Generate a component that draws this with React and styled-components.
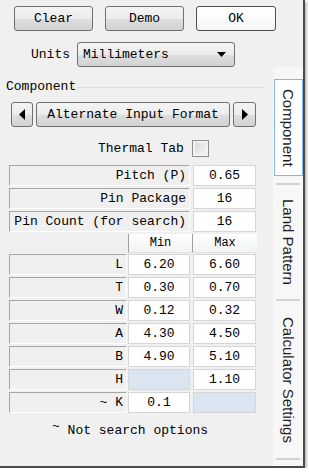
import React from "react";
import styled, { createGlobalStyle } from "styled-components";

const GlobalStyle = createGlobalStyle`
  html, body {
    margin: 0;
    padding: 0;
    background: #ffffff;
  }
  body {
    font-family: "Liberation Mono", "DejaVu Sans Mono", monospace;
    font-size: 13px;
    color: #000;
  }
`;

const Window = styled.div`
  width: 303px;
  height: 466px;
  background: #f0f0f0;
  border-right: 2px solid #4a4a4a;
  border-bottom: 2px solid #4a4a4a;
  box-shadow: 2px 2px 2px rgba(0, 0, 0, 0.25);
  display: flex;
  flex-direction: column;
`;

const ButtonBar = styled.div`
  display: flex;
  gap: 12px;
  padding: 6px 0 0 14px;
`;

const Button = styled.button`
  box-sizing: border-box;
  width: ${p => p.$w}px;
  height: 25px;
  padding: 0;
  border: 1px solid ${p => (p.$primary ? "#505050" : "#707070")};
  border-radius: 3px;
  background: ${p =>
    p.$primary
      ? "linear-gradient(#ffffff, #f6f6f6)"
      : "linear-gradient(#f4f4f4 0%, #ececec 50%, #dedede 51%, #d2d2d2 100%)"};
  font: inherit;
  line-height: 23px;
  color: #000;
`;

const UnitsRow = styled.div`
  display: flex;
  align-items: center;
  gap: 7px;
  margin-top: 11px;
  padding-left: 31px;
`;

const Select = styled.div`
  box-sizing: border-box;
  width: 158px;
  height: 25px;
  display: flex;
  align-items: center;
  justify-content: space-between;
  padding: 0 8px 0 5px;
  border: 1px solid #707070;
  border-radius: 3px;
  background: linear-gradient(#f4f4f4 0%, #ececec 50%, #dedede 51%, #d2d2d2 100%);
`;

const Body = styled.div`
  flex: 1;
  display: flex;
`;

const Main = styled.div`
  width: 273px;
`;

const SectionTitle = styled.div`
  display: flex;
  align-items: center;
  height: 14px;
  line-height: 14px;
  margin: 13px 8px 0 0;
  padding-left: 6px;

  &::after {
    content: "";
    flex: 1;
    height: 1px;
    margin-left: 1px;
    background: #d5dfe6;
  }
`;

const ArrowRow = styled.div`
  display: flex;
  gap: 3px;
  margin-top: 8px;
  padding-left: 11px;
`;

const ArrowButton = styled(Button)`
  display: flex;
  align-items: center;
  justify-content: center;
`;

const ThermalRow = styled.div`
  display: flex;
  align-items: center;
  gap: 8px;
  height: 17px;
  margin-top: 13px;
  padding-left: 98px;
`;

const Checkbox = styled.div`
  box-sizing: border-box;
  width: 17px;
  height: 17px;
  border: 1px solid #8e8f8f;
  background: linear-gradient(135deg, #d8d8d8, #f6f6f6);
  box-shadow: inset 0 0 0 2px #f2f2f2;
`;

const Row = styled.div`
  display: flex;
  height: ${p => p.$h || 21}px;
  margin-top: ${p => p.$gap}px;
  padding-left: ${p => p.$indent || 9}px;
`;

const LabelCell = styled.div`
  box-sizing: border-box;
  width: ${p => p.$w}px;
  display: flex;
  align-items: center;
  justify-content: flex-end;
  padding-right: 3px;
  border: 1px solid;
  border-color: #a6a6a6 #ffffff #ffffff #a6a6a6;
  background: #f0f0f0;
  white-space: pre;
`;

const ValueCell = styled.div`
  box-sizing: border-box;
  width: ${p => p.$w}px;
  margin-left: ${p => p.$ml}px;
  display: flex;
  align-items: center;
  justify-content: center;
  border: 1px solid #d6d6d6;
  background: ${p => (p.$empty ? "#dae5f1" : "#ffffff")};
`;

const HeaderCell = styled.div`
  box-sizing: border-box;
  width: ${p => p.$w}px;
  display: flex;
  align-items: center;
  justify-content: center;
  border-left: 1px solid #a0a0a0;
  border-bottom: 1px solid #e2e2e2;
  background: linear-gradient(#ffffff, #f1f2f4);
  font-size: 12px;
`;

const Tilde = styled.span`
  vertical-align: 4px;
`;

const Note = styled.div`
  margin-top: 7px;
  padding-left: 52px;
  line-height: 14px;
  white-space: pre;
`;

const TabStrip = styled.div`
  width: 30px;
  display: flex;
  flex-direction: column;
  padding-top: 12px;
  background: #f7f7f7;
  font-family: "Liberation Sans", Arial, sans-serif;
  font-size: 15px;
  color: #1e1e1e;
`;

const Tab = styled.div`
  box-sizing: border-box;
  height: ${p => p.$h}px;
  margin-left: 1px;
  display: flex;
  align-items: center;
  justify-content: center;
  writing-mode: vertical-rl;
  border: 1px solid ${p => (p.$active ? "#86b7ea" : "transparent")};
  background: ${p => (p.$active ? "#ffffff" : "transparent")};
`;

const TabSep = styled.div`
  height: 2px;
  margin: ${p => p.$mt || 0}px 3px 0 3px;
  background: #d2d2d2;
`;

const Triangle = ({ dir }) => {
  const pts = {
    down: "0,0 9,0 4.5,5",
    left: "6,0 6,11 0,5.5",
    right: "0,0 0,11 6,5.5",
  };
  const size = dir === "down" ? [9, 5] : [6, 11];
  return (
    <svg width={size[0]} height={size[1]} viewBox={`0 0 ${size[0]} ${size[1]}`}>
      <polygon points={pts[dir]} fill="#000" />
    </svg>
  );
};

const dims = [
  { k: "L", min: "6.20", max: "6.60" },
  { k: "T", min: "0.30", max: "0.70" },
  { k: "W", min: "0.12", max: "0.32" },
  { k: "A", min: "4.30", max: "4.50" },
  { k: "B", min: "4.90", max: "5.10" },
  { k: "H", min: "", max: "1.10" },
];

export default function App() {
  return (
    <>
      <GlobalStyle />
      <Window>
        <ButtonBar>
          <Button $w={79}>Clear</Button>
          <Button $w={79}>Demo</Button>
          <Button $w={80} $primary>OK</Button>
        </ButtonBar>
        <UnitsRow>
          <span>Units</span>
          <Select>
            <span>Millimeters</span>
            <Triangle dir="down" />
          </Select>
        </UnitsRow>
        <Body>
          <Main>
            <SectionTitle>Component</SectionTitle>
            <ArrowRow>
              <ArrowButton $w={22}><Triangle dir="left" /></ArrowButton>
              <Button $w={194}>Alternate Input Format</Button>
              <ArrowButton $w={23}><Triangle dir="right" /></ArrowButton>
            </ArrowRow>
            <ThermalRow>
              <span>Thermal Tab</span>
              <Checkbox />
            </ThermalRow>

            <Row $gap={8}>
              <LabelCell $w={181}>Pitch (P)</LabelCell>
              <ValueCell $w={63} $ml={3}>0.65</ValueCell>
            </Row>
            <Row $gap={2}>
              <LabelCell $w={181}>Pin Package</LabelCell>
              <ValueCell $w={63} $ml={3}>16</ValueCell>
            </Row>
            <Row $gap={2}>
              <LabelCell $w={181}>Pin Count (for search)</LabelCell>
              <ValueCell $w={63} $ml={3}>16</ValueCell>
            </Row>

            <Row $gap={2} $h={19} $indent={128}>
              <HeaderCell $w={64}>Min</HeaderCell>
              <HeaderCell $w={65}>Max</HeaderCell>
            </Row>

            {dims.map((d, i) => (
              <Row key={d.k} $gap={i === 0 ? 1 : 2}>
                <LabelCell $w={118}>{d.k}</LabelCell>
                <ValueCell $w={62} $ml={1} $empty={!d.min}>{d.min}</ValueCell>
                <ValueCell $w={63} $ml={3} $empty={!d.max}>{d.max}</ValueCell>
              </Row>
            ))}
            <Row $gap={2}>
              <LabelCell $w={118}><Tilde>~</Tilde> K</LabelCell>
              <ValueCell $w={62} $ml={1}>0.1</ValueCell>
              <ValueCell $w={63} $ml={3} $empty />
            </Row>

            <Note><Tilde>~</Tilde> Not search options</Note>
          </Main>
          <TabStrip>
            <Tab $h={97} $active>Component</Tab>
            <TabSep $mt={7} />
            <Tab $h={114}>Land Pattern</Tab>
            <TabSep />
            <Tab $h={157}>Calculator Settings</Tab>
            <TabSep />
          </TabStrip>
        </Body>
      </Window>
    </>
  );
}
